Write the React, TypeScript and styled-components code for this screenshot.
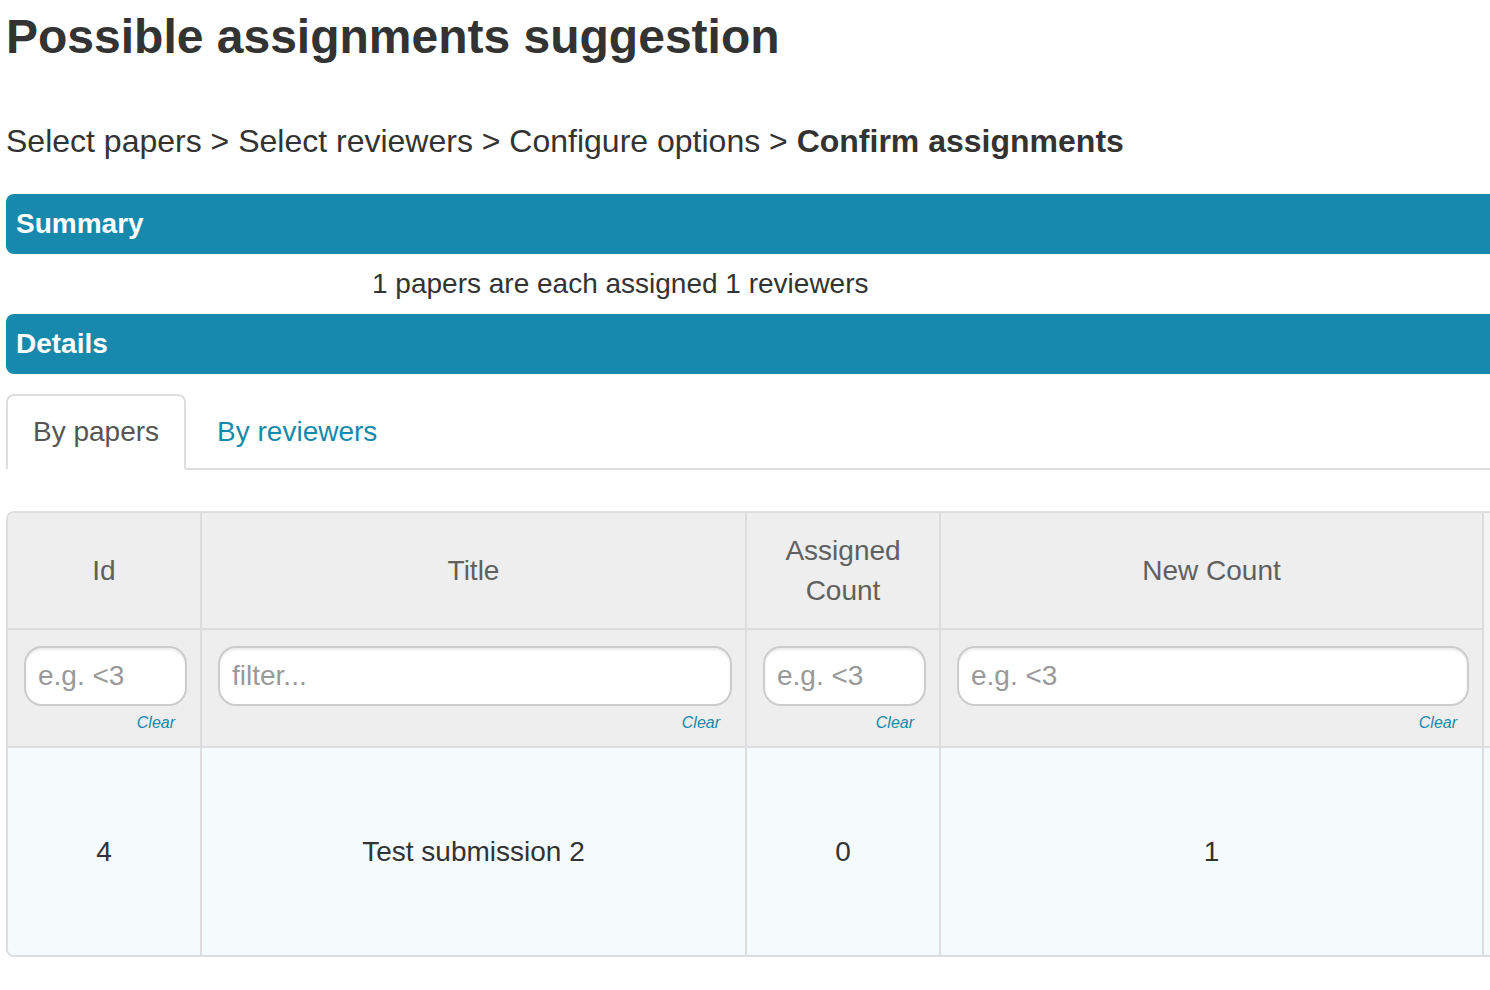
import React from 'react';
import styled, { createGlobalStyle } from 'styled-components';

const GlobalStyle = createGlobalStyle`
  html, body {
    margin: 0;
    padding: 0;
    background: #fff;
  }
  body {
    font-family: "Liberation Sans", Arial, Helvetica, sans-serif;
    color: #333;
  }
`;

const Page = styled.div`
  padding-left: 6px;
`;

const Title = styled.h1`
  margin: 10px 0 0;
  font-size: 48px;
  line-height: 53px;
  font-weight: bold;
  color: #333;
`;

const Steps = styled.div`
  margin-top: 58px;
  font-size: 32px;
  line-height: 40px;
  color: #333;
`;

const Current = styled.b`
  font-weight: bold;
`;

const SectionBar = styled.div`
  background: #1789ac;
  color: #fff;
  font-weight: bold;
  font-size: 28px;
  line-height: 40px;
  padding: 10px 10px;
  border-radius: 8px 0 0 8px;
`;

const SummaryBar = styled(SectionBar)`
  margin-top: 33px;
`;

const SummaryText = styled.div`
  font-size: 28px;
  line-height: 40px;
  padding: 10px 0 10px 366px;
  color: #333;
`;

const Tabs = styled.div`
  margin-top: 20px;
  display: flex;
  border-bottom: 2px solid #ddd;
`;

const Tab = styled.div<{ $active?: boolean }>`
  font-size: 28px;
  line-height: 40px;
  padding: 16px 25px;
  margin-right: 4px;
  margin-bottom: -2px;
  border: 2px solid ${p => (p.$active ? '#ddd' : 'transparent')};
  border-bottom-color: ${p => (p.$active ? '#fff' : 'transparent')};
  border-radius: 8px 8px 0 0;
  background: ${p => (p.$active ? '#fff' : 'transparent')};
  color: ${p => (p.$active ? '#555' : '#1789ac')};
`;

const Table = styled.div`
  margin-top: 41px;
  display: grid;
  grid-template-columns: 192px 545px 194px 543px 1fr;
  grid-template-rows: 115px 118px 209px;
  border: 2px solid #ddd;
  border-right: none;
  border-radius: 8px 0 0 8px;
  overflow: hidden;
`;

const Cell = styled.div<{ $first?: boolean; $top?: boolean }>`
  border-left: ${p => (p.$first ? 'none' : '2px solid #ddd')};
  border-top: ${p => (p.$top ? 'none' : '2px solid #ddd')};
`;

const HeadCell = styled(Cell)`
  background: #eee;
  color: #606060;
  font-size: 28px;
  line-height: 40px;
  display: flex;
  align-items: center;
  justify-content: center;
  text-align: center;
  padding: 0 10px;
`;

const SpareHead = styled(Cell)`
  grid-row: span 2;
  background: #f4f4f4;
`;

const FilterCell = styled(Cell)`
  background: #eee;
  padding: 16px 13px 0 16px;
`;

const FilterInput = styled.input`
  box-sizing: border-box;
  display: block;
  width: 100%;
  height: 60px;
  border: 2px solid #ccc;
  border-radius: 18px;
  padding: 0 12px;
  font-family: inherit;
  font-size: 28px;
  color: #555;
  background: #fff;
  box-shadow: inset 0 2px 2px rgba(0, 0, 0, 0.075);
  outline: none;
  &::placeholder {
    color: #999;
  }
`;

const Clear = styled.a`
  display: block;
  margin-top: 5px;
  padding-right: 12px;
  text-align: right;
  font-size: 16px;
  line-height: 24px;
  font-style: italic;
  color: #1789ac;
`;

const DataCell = styled(Cell)`
  background: #f5fafd;
  display: flex;
  align-items: center;
  justify-content: center;
  font-size: 28px;
  color: #333;
`;

const columns = [
  { label: 'Id', placeholder: 'e.g. <3', value: '4' },
  { label: 'Title', placeholder: 'filter...', value: 'Test submission 2' },
  { label: 'Assigned Count', placeholder: 'e.g. <3', value: '0' },
  { label: 'New Count', placeholder: 'e.g. <3', value: '1' },
];

const App = () => {
  return (
    <>
      <GlobalStyle />
      <Page>
        <Title>Possible assignments suggestion</Title>
        <Steps>
          Select papers &gt; Select reviewers &gt; Configure options &gt;{' '}
          <Current>Confirm assignments</Current>
        </Steps>
        <SummaryBar>Summary</SummaryBar>
        <SummaryText>1 papers are each assigned 1 reviewers</SummaryText>
        <SectionBar>Details</SectionBar>
        <Tabs>
          <Tab $active>By papers</Tab>
          <Tab>By reviewers</Tab>
        </Tabs>
        <Table>
          {columns.map((c, i) => (
            <HeadCell key={'h' + i} $first={i === 0} $top>
              {c.label}
            </HeadCell>
          ))}
          <SpareHead $top />
          {columns.map((c, i) => (
            <FilterCell key={'f' + i} $first={i === 0}>
              <FilterInput placeholder={c.placeholder} />
              <Clear>Clear</Clear>
            </FilterCell>
          ))}
          {columns.map((c, i) => (
            <DataCell key={'d' + i} $first={i === 0}>
              {c.value}
            </DataCell>
          ))}
          <DataCell />
        </Table>
      </Page>
    </>
  );
};

export default App;
